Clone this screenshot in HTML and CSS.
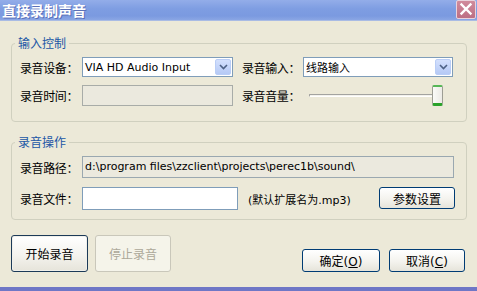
FILE: index.html
```html
<!DOCTYPE html>
<html lang="zh-CN">
<head>
    <meta charset="UTF-8">
    <title>直接录制声音</title>
    <link rel="stylesheet" href="styles.css">
</head>
<body>
<div class="window">
    <div class="titlebar">
        <span class="title">直接录制声音</span>
        <span class="close">
            <svg width="20" height="19" viewBox="0 0 20 19">
                <path d="M5.5 4.5 L14.5 13.5 M14.5 4.5 L5.5 13.5" stroke="#fff" stroke-width="2.4" stroke-linecap="square"/>
            </svg>
        </span>
    </div>

    <fieldset class="group group-input">
        <legend>输入控制</legend>
        <div class="grid grid-input">
            <label>录音设备：</label>
            <div class="combo">
                <span class="combo-text">VIA HD Audio Input</span>
                <span class="combo-btn"><svg width="9" height="6" viewBox="0 0 9 6"><path d="M1 1 L4.5 4.5 L8 1" fill="none" stroke="#4d6185" stroke-width="1.6"/></svg></span>
            </div>
            <label class="second">录音输入：</label>
            <div class="combo">
                <span class="combo-text">线路输入</span>
                <span class="combo-btn"><svg width="9" height="6" viewBox="0 0 9 6"><path d="M1 1 L4.5 4.5 L8 1" fill="none" stroke="#4d6185" stroke-width="1.6"/></svg></span>
            </div>

            <label>录音时间：</label>
            <div class="field field-off"></div>
            <label class="second">录音音量：</label>
            <div class="slider">
                <div class="track"></div>
                <div class="thumb"></div>
            </div>
        </div>
    </fieldset>

    <fieldset class="group group-op">
        <legend>录音操作</legend>
        <div class="grid grid-op">
            <label>录音路径：</label>
            <div class="field field-off path">d:\program files\zzclient\projects\perec1b\sound\</div>

            <label>录音文件：</label>
            <div class="field"></div>
            <span class="note">(默认扩展名为.mp3)</span>
            <button class="btn btn-param">参数设置</button>
        </div>
    </fieldset>

    <div class="actions">
        <div class="actions-left">
            <button class="btn btn-big btn-default">开始录音</button>
            <button class="btn btn-big" disabled>停止录音</button>
        </div>
        <div class="actions-right">
            <button class="btn btn-ok">确定(<u>O</u>)</button>
            <button class="btn btn-cancel">取消(<u>C</u>)</button>
        </div>
    </div>
</div>
</body>
</html>
```

FILE: styles.css
```css
body {
    margin: 0;
    background: #ece9d8;
    font-family: "DejaVu Sans", "Noto Sans CJK SC", sans-serif;
    font-size: 12px;
    color: #000;
}

.window {
    width: 477px;
    height: 291px;
    box-sizing: border-box;
    border-bottom: 4px solid #6f77c6;
    background: #ece9d8;
    overflow: hidden;
}

/* title bar */
.titlebar {
    height: 21px;
    display: flex;
    align-items: flex-start;
    justify-content: space-between;
    background: linear-gradient(#93ade9, #7e9de2 45%, #7b9ae0 80%, #8aa6e4);
    border-bottom: 1px solid #a9bbe4;
    box-sizing: border-box;
}

.title {
    font-family: "Noto Sans CJK SC", sans-serif;
    font-weight: bold;
    font-size: 14px;
    line-height: 20px;
    color: #fff;
    padding-left: 2px;
    text-shadow: 1px 1px 0 #5a70b8;
}

.close {
    width: 20px;
    height: 19px;
    margin-right: 1px;
    box-sizing: border-box;
    border: 1px solid #e9d3dc;
    border-radius: 2px;
    background: linear-gradient(#d08b9c, #bd6f84);
    display: flex;
}

.close svg {
    margin: -1px;
}

/* group boxes */
.group {
    width: 456px;
    box-sizing: border-box;
    margin: 15px 0 0 11px;
    border: 1px solid #d0d0bf;
    border-radius: 4px;
    padding: 7px 13px 15px 8px;
    min-width: 0;
}

.group legend {
    font-family: "Noto Sans CJK SC", sans-serif;
    font-size: 12px;
    line-height: 14px;
    color: #2157a6;
    padding: 0 3px;
    margin-left: -5px;
}

.group-op {
    margin-top: 13px;
    padding: 7px 11px 9px 8px;
}

.grid {
    display: grid;
    align-items: center;
}

.grid-input {
    grid-template-columns: 62px 151px 70px 150px;
    grid-template-rows: 20px 21px;
    row-gap: 8px;
}

.grid-op {
    grid-template-columns: 62px 156px 141px 76px;
    grid-template-rows: 22px 23px;
    row-gap: 9px;
}

.grid label {
    font-family: "Noto Sans CJK SC", sans-serif;
    font-size: 12px;
    letter-spacing: -0.4px;
    white-space: nowrap;
}

.grid label.second {
    padding-left: 9px;
}

/* combo box */
.combo {
    height: 20px;
    box-sizing: border-box;
    border: 1px solid #7f9db9;
    background: #fff;
    display: flex;
    align-items: center;
    justify-content: space-between;
}

.combo-text {
    padding-left: 2px;
    font-size: 11px;
    white-space: nowrap;
}

.combo-btn {
    width: 16px;
    height: 16px;
    margin-right: 1px;
    box-sizing: border-box;
    border: 1px solid #b9cdf6;
    border-radius: 2px;
    background: linear-gradient(#d3e0fd, #b5c9f5);
    display: flex;
    align-items: center;
    justify-content: center;
}

/* edit fields */
.field {
    height: 100%;
    box-sizing: border-box;
    border: 1px solid #7f9db9;
    background: #fff;
}

.field-off {
    border-color: #a8aca8;
    background: #ebe9de;
}

.path {
    grid-column: 2 / 5;
    width: 372px;
    border-color: #9aa8b0;
    font-size: 11px;
    line-height: 20px;
    padding-left: 2px;
    white-space: nowrap;
    overflow: hidden;
}

.note {
    padding-left: 10px;
    font-size: 11px;
    white-space: nowrap;
}

/* slider */
.slider {
    display: flex;
    align-items: center;
    height: 21px;
    padding: 0 10px 0 6px;
}

.track {
    flex: 1;
    height: 3px;
    box-sizing: border-box;
    border-top: 1px solid #a3a3a0;
    border-left: 1px solid #a3a3a0;
    border-bottom: 1px solid #fff;
    border-radius: 1px;
    background: #f3f2ec;
}

.thumb {
    width: 11px;
    height: 21px;
    margin-left: -2px;
    box-sizing: border-box;
    border: 1px solid #9d9d94;
    border-bottom: 3px solid #2aa22a;
    border-top: 2px solid #56b756;
    border-radius: 2px;
    background: linear-gradient(90deg, #fbfbf8, #ecebe6);
}

/* buttons */
.btn {
    box-sizing: border-box;
    border: 1px solid #003c74;
    border-radius: 3px;
    background: linear-gradient(#ffffff, #f4f3ee 55%, #e6e4da);
    font-family: "DejaVu Sans", "Noto Sans CJK SC", sans-serif;
    font-size: 12px;
    color: #000;
    padding: 0;
}

.btn:disabled {
    border-color: #c9c7ba;
    background: #f5f4ea;
    color: #aca899;
}

.btn-param {
    width: 76px;
    height: 22px;
    align-self: start;
}

.actions {
    display: flex;
    justify-content: space-between;
    align-items: flex-end;
    margin: 15px 12px 0 11px;
}

.actions-left,
.actions-right {
    display: flex;
    align-items: flex-end;
}

.actions-left {
    gap: 7px;
}

.actions-right {
    gap: 9px;
}

.btn-big {
    width: 76px;
    height: 37px;
}

.btn-default {
    width: 77px;
    border-color: #1c3a58;
    box-shadow: inset 0 0 0 1px #f0f0ea;
}

.btn-ok {
    width: 78px;
    height: 23px;
}

.btn-cancel {
    width: 76px;
    height: 23px;
}
```
